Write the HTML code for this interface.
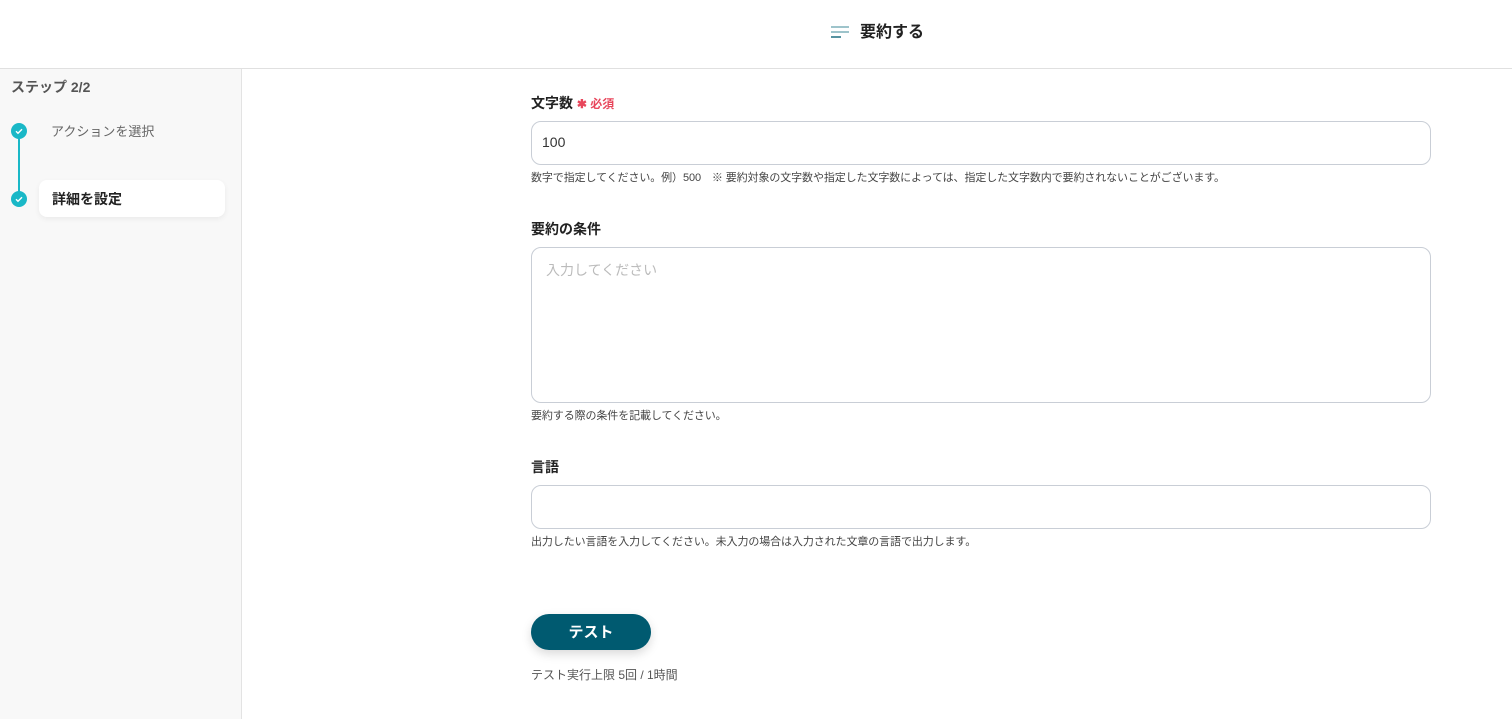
<!DOCTYPE html>
<html><head><meta charset="utf-8"><style>
*{box-sizing:border-box;margin:0;padding:0}
body{width:1512px;height:719px;overflow:hidden;background:#fff;font-family:"Liberation Sans","Noto Sans CJK JP",sans-serif;color:#333;position:relative}
.hdr{position:absolute;left:0;top:0;width:1512px;height:69px;border-bottom:1px solid #e0e0e0;background:#fff}
.hdr .t{position:absolute;left:860px;top:18px;font-size:16px;font-weight:bold;color:#222}
.side{position:absolute;left:0;top:69px;width:242px;height:650px;background:#f8f8f8;border-right:1px solid #e3e3e3}
.abs{position:absolute}
.dot{position:absolute;width:16px;height:16px;border-radius:50%;background:#1ab8c7}
.lbl{position:absolute;left:531px;font-size:14px;font-weight:bold;color:#222}
.inp{position:absolute;left:531px;width:900px;border:1px solid #c9ced6;border-radius:10px;background:#fff}
.help{position:absolute;left:531px;font-size:11px;color:#444;letter-spacing:-0.1px}
</style></head><body>
<div class="hdr">
<svg class="abs" style="left:830px;top:25px" width="20" height="14"><line x1="1" y1="2" x2="19" y2="2" stroke="#7fb0ba" stroke-width="1.5"/><line x1="1" y1="7" x2="19" y2="7" stroke="#7fb0ba" stroke-width="1.5"/><line x1="1" y1="12" x2="11" y2="12" stroke="#1f6f80" stroke-width="1.5"/></svg>
<div class="t">要約する</div>
</div>
<div class="side">
<div class="abs" style="left:11px;top:8px;font-size:14px;font-weight:bold;color:#555">ステップ 2/2</div>
<div class="abs" style="left:18px;top:69px;width:2px;height:62px;background:#1ab8c7"></div>
<div class="dot" style="left:11px;top:54px"><svg width="16" height="16"><path d="M5 8.2l2 2 4-4" stroke="#fff" stroke-width="1.4" fill="none"/></svg></div>
<div class="dot" style="left:11px;top:122px"><svg width="16" height="16"><path d="M5 8.2l2 2 4-4" stroke="#fff" stroke-width="1.4" fill="none"/></svg></div>
<div class="abs" style="left:51px;top:52px;font-size:13px;color:#666">アクションを選択</div>
<div class="abs" style="left:39px;top:111px;width:186px;height:37px;background:#fff;border-radius:8px;box-shadow:0 2px 6px rgba(0,0,0,.06)"></div>
<div class="abs" style="left:52px;top:120px;font-size:14px;font-weight:bold;color:#222">詳細を設定</div>
</div>
<div class="lbl" style="top:93px">文字数 <span style="color:#e8465b;font-size:12px">✱ 必須</span></div>
<div class="inp" style="top:121px;height:44px"><span class="abs" style="left:10px;top:12px;font-size:14px;color:#333">100</span></div>
<div class="help" style="top:169px">数字で指定してください。例）500　※ 要約対象の文字数や指定した文字数によっては、指定した文字数内で要約されないことがございます。</div>
<div class="lbl" style="top:219px">要約の条件</div>
<div class="inp" style="top:247px;height:156px"><span class="abs" style="left:14px;top:12px;font-size:14px;color:#bbb">入力してください</span></div>
<div class="help" style="top:407px">要約する際の条件を記載してください。</div>
<div class="lbl" style="top:457px">言語</div>
<div class="inp" style="top:485px;height:44px"></div>
<div class="help" style="top:533px">出力したい言語を入力してください。未入力の場合は入力された文章の言語で出力します。</div>
<div class="abs" style="left:531px;top:614px;width:120px;height:36px;border-radius:18px;background:#005a70;color:#fff;font-size:15px;font-weight:bold;text-align:center;line-height:37px;box-shadow:0 4px 10px rgba(0,0,0,.15)">テスト</div>
<div class="abs" style="left:531px;top:666px;font-size:12px;color:#555">テスト実行上限 5回 / 1時間</div>
</body></html>
